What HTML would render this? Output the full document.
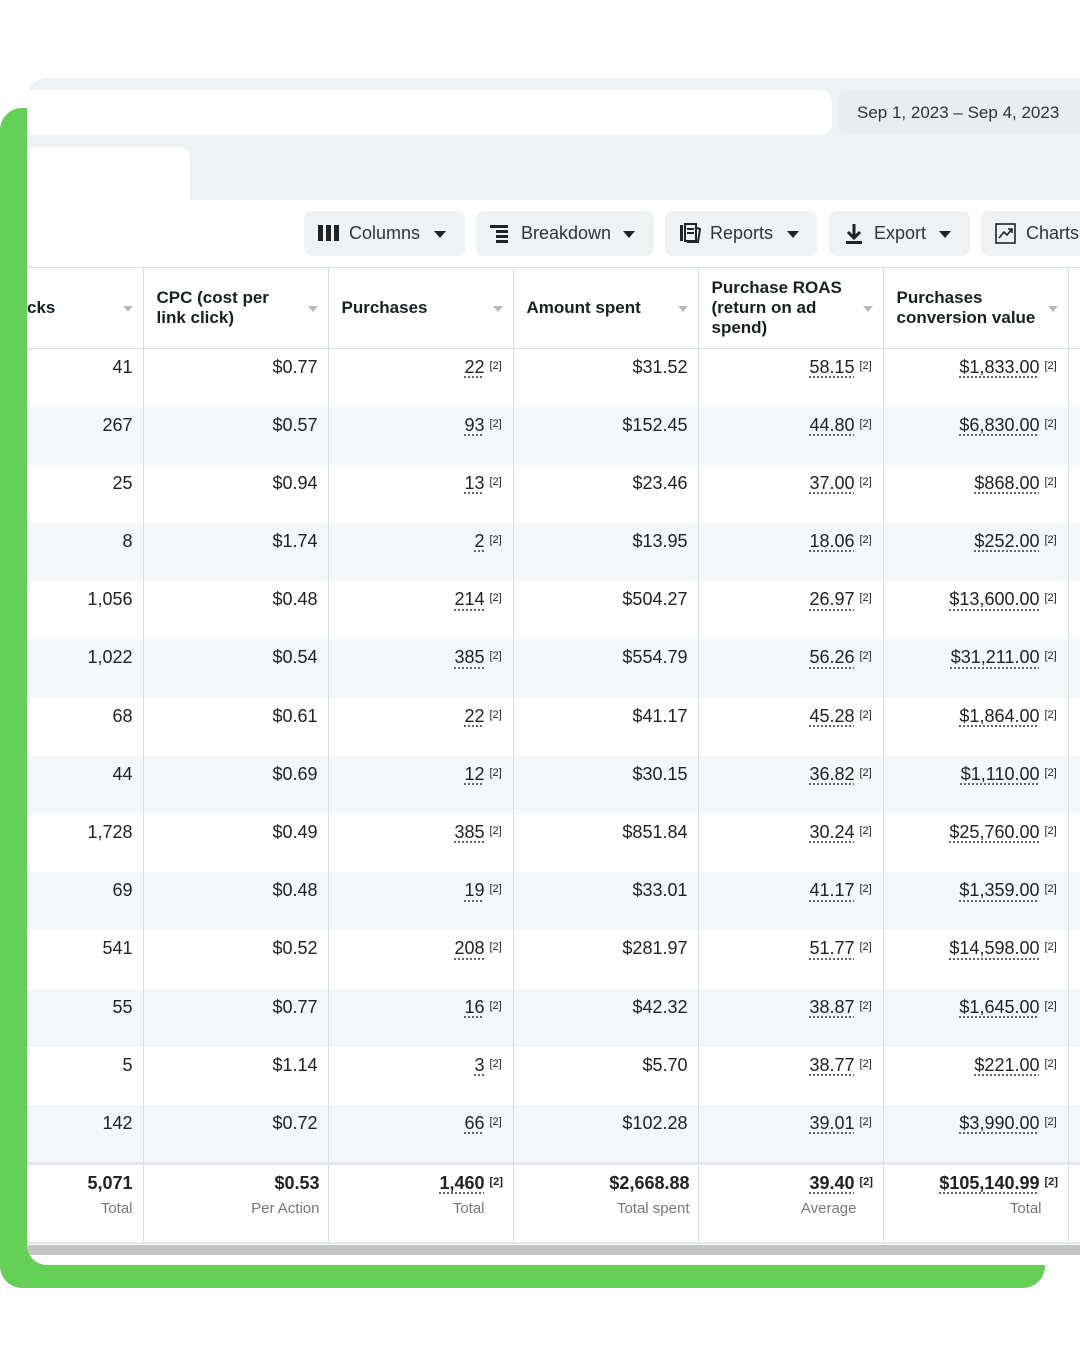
<!DOCTYPE html>
<html><head><meta charset="utf-8"><style>
*{box-sizing:border-box;margin:0;padding:0}
body{width:1080px;height:1350px;background:#fff;font-family:"Liberation Sans",Arial,sans-serif;color:#1c1e21;position:relative;overflow:hidden}
.green{position:absolute;left:0;top:108px;width:1045px;height:1180px;background:#66cf57;border-radius:22px}
.card{position:absolute;left:27px;top:78px;width:1070px;height:1187px;background:#fff;border-radius:20px 0 0 20px;overflow:hidden}
.top{position:absolute;left:0;top:0;width:1070px;height:122px;background:#f0f1f2}
.search{position:absolute;left:0;top:12px;width:805px;height:45px;background:#fff;border-radius:0 12px 12px 0}
.date{position:absolute;left:811px;top:12px;width:260px;height:45px;background:#ebecee;border-radius:10px 0 0 10px;font-size:17px;line-height:45px;padding-left:19px;color:#333}
.tab{position:absolute;left:0;top:69px;width:163px;height:55px;background:#fff;border-radius:0 10px 0 0}
.btn{position:absolute;top:133px;height:45px;background:#f0f1f2;border-radius:8px;font-size:18px;line-height:45px;color:#333;padding-left:45px}
.btn svg{position:absolute;left:14px;top:12px}
.btn .car{position:absolute;top:20px;width:0;height:0;border-left:6px solid transparent;border-right:6px solid transparent;border-top:7px solid #222}
table{position:absolute;left:0;top:189px;border-collapse:collapse;table-layout:fixed}
td,th{border-left:1px solid #dadde1;font-size:18px}
th{height:81px;border-top:1px solid #dadde1;border-bottom:1px solid #dadde1;text-align:left;font-weight:bold;font-size:17px;line-height:20px;padding-left:13px;position:relative;color:#1c1e21}
th .a{position:absolute;right:10px;top:38px;width:0;height:0;border-left:5px solid transparent;border-right:5px solid transparent;border-top:6px solid #bbb}
td{height:58.2px;vertical-align:top;text-align:right;padding:8px 10px 0 0;color:#222}
tr.g td{background:#f5f6f7}
td:first-child,th:first-child{border-left:none}
u{text-decoration:underline dotted #555;text-underline-offset:4px}
sup{font-size:11px;vertical-align:4px;margin-left:5px;display:inline-block;width:13px;text-align:left}
tr.t td{height:80px;border-top:3px solid #e4e6e9;border-bottom:2px solid #e4e6e9;font-weight:bold;padding-top:8px;background:#fff}
tr.t td span{display:block;font-weight:normal;font-size:15px;color:#777;margin-top:6px}
.scroll{position:absolute;left:0;top:1167px;width:1070px;height:10px;background:#c4c4c4}
</style></head><body>
<div class="green"></div>
<div class="card">
<div class="top"><div class="search"></div><div class="date">Sep 1, 2023 – Sep 4, 2023</div><div class="tab"></div></div>
<div class="btn" style="left:277px;width:161px"><svg width="22" height="20"><rect x="0" y="2" width="5" height="16" fill="#222"/><rect x="8" y="2" width="5" height="16" fill="#222"/><rect x="16" y="2" width="5" height="16" fill="#222"/></svg>Columns<i class="car" style="left:130px"></i></div>
<div class="btn" style="left:449px;width:178px"><svg width="22" height="20"><rect x="0" y="2" width="18" height="3" fill="#222"/><rect x="6" y="7" width="12" height="3" fill="#222"/><rect x="6" y="12" width="12" height="3" fill="#222"/><rect x="6" y="17" width="12" height="3" fill="#222"/></svg>Breakdown<i class="car" style="left:147px"></i></div>
<div class="btn" style="left:638px;width:152px"><svg width="22" height="22"><rect x="1" y="2" width="3" height="16" fill="#222"/><rect x="6" y="1" width="11" height="17" fill="none" stroke="#222" stroke-width="2"/><rect x="8" y="5" width="7" height="2" fill="#222"/><rect x="8" y="9" width="7" height="2" fill="#222"/><path d="M18 5 L21 6 L19 19 L8 19" fill="none" stroke="#222" stroke-width="2"/></svg>Reports<i class="car" style="left:122px"></i></div>
<div class="btn" style="left:802px;width:141px"><svg width="22" height="22"><path d="M11 1 V14 M5 9 L11 15 L17 9" fill="none" stroke="#222" stroke-width="3"/><rect x="3" y="18" width="16" height="3" fill="#222"/></svg>Export<i class="car" style="left:110px"></i></div>
<div class="btn" style="left:954px;width:120px"><svg width="22" height="22"><rect x="1" y="1" width="19" height="19" fill="none" stroke="#222" stroke-width="1.6"/><path d="M4 15 L9 9 L12 12 L17 6 M13 6 H17 V10" fill="none" stroke="#222" stroke-width="1.6"/></svg>Charts</div>
<table>
<colgroup><col style="width:116px"><col style="width:185px"><col style="width:185px"><col style="width:185px"><col style="width:185px"><col style="width:185px"><col style="width:12px"></colgroup>
<tr><th style="padding-left:0">cks<i class="a"></i></th><th>CPC (cost per<br>link click)<i class="a"></i></th><th>Purchases<i class="a"></i></th><th>Amount spent<i class="a"></i></th><th>Purchase ROAS<br>(return on ad<br>spend)<i class="a"></i></th><th>Purchases<br>conversion value<i class="a"></i></th><th></th></tr>
<tr><td>41</td><td>$0.77</td><td><u>22</u><sup>[2]</sup></td><td>$31.52</td><td><u>58.15</u><sup>[2]</sup></td><td><u>$1,833.00</u><sup>[2]</sup></td><td></td></tr>
<tr class="g"><td>267</td><td>$0.57</td><td><u>93</u><sup>[2]</sup></td><td>$152.45</td><td><u>44.80</u><sup>[2]</sup></td><td><u>$6,830.00</u><sup>[2]</sup></td><td></td></tr>
<tr><td>25</td><td>$0.94</td><td><u>13</u><sup>[2]</sup></td><td>$23.46</td><td><u>37.00</u><sup>[2]</sup></td><td><u>$868.00</u><sup>[2]</sup></td><td></td></tr>
<tr class="g"><td>8</td><td>$1.74</td><td><u>2</u><sup>[2]</sup></td><td>$13.95</td><td><u>18.06</u><sup>[2]</sup></td><td><u>$252.00</u><sup>[2]</sup></td><td></td></tr>
<tr><td>1,056</td><td>$0.48</td><td><u>214</u><sup>[2]</sup></td><td>$504.27</td><td><u>26.97</u><sup>[2]</sup></td><td><u>$13,600.00</u><sup>[2]</sup></td><td></td></tr>
<tr class="g"><td>1,022</td><td>$0.54</td><td><u>385</u><sup>[2]</sup></td><td>$554.79</td><td><u>56.26</u><sup>[2]</sup></td><td><u>$31,211.00</u><sup>[2]</sup></td><td></td></tr>
<tr><td>68</td><td>$0.61</td><td><u>22</u><sup>[2]</sup></td><td>$41.17</td><td><u>45.28</u><sup>[2]</sup></td><td><u>$1,864.00</u><sup>[2]</sup></td><td></td></tr>
<tr class="g"><td>44</td><td>$0.69</td><td><u>12</u><sup>[2]</sup></td><td>$30.15</td><td><u>36.82</u><sup>[2]</sup></td><td><u>$1,110.00</u><sup>[2]</sup></td><td></td></tr>
<tr><td>1,728</td><td>$0.49</td><td><u>385</u><sup>[2]</sup></td><td>$851.84</td><td><u>30.24</u><sup>[2]</sup></td><td><u>$25,760.00</u><sup>[2]</sup></td><td></td></tr>
<tr class="g"><td>69</td><td>$0.48</td><td><u>19</u><sup>[2]</sup></td><td>$33.01</td><td><u>41.17</u><sup>[2]</sup></td><td><u>$1,359.00</u><sup>[2]</sup></td><td></td></tr>
<tr><td>541</td><td>$0.52</td><td><u>208</u><sup>[2]</sup></td><td>$281.97</td><td><u>51.77</u><sup>[2]</sup></td><td><u>$14,598.00</u><sup>[2]</sup></td><td></td></tr>
<tr class="g"><td>55</td><td>$0.77</td><td><u>16</u><sup>[2]</sup></td><td>$42.32</td><td><u>38.87</u><sup>[2]</sup></td><td><u>$1,645.00</u><sup>[2]</sup></td><td></td></tr>
<tr><td>5</td><td>$1.14</td><td><u>3</u><sup>[2]</sup></td><td>$5.70</td><td><u>38.77</u><sup>[2]</sup></td><td><u>$221.00</u><sup>[2]</sup></td><td></td></tr>
<tr class="g"><td>142</td><td>$0.72</td><td><u>66</u><sup>[2]</sup></td><td>$102.28</td><td><u>39.01</u><sup>[2]</sup></td><td><u>$3,990.00</u><sup>[2]</sup></td><td></td></tr>
<tr class="t"><td>5,071<span>Total</span></td><td style="padding-right:8px">$0.53<span>Per Action</span></td><td><u>1,460</u><sup>[2]</sup><span style="margin-right:18px">Total</span></td><td style="padding-right:8px">$2,668.88<span>Total spent</span></td><td><u>39.40</u><sup>[2]</sup><span style="margin-right:16px">Average</span></td><td><u>$105,140.99</u><sup>[2]</sup><span style="margin-right:16px">Total</span></td><td></td></tr>
</table>
<div class="scroll"></div>
</div>
</body></html>
